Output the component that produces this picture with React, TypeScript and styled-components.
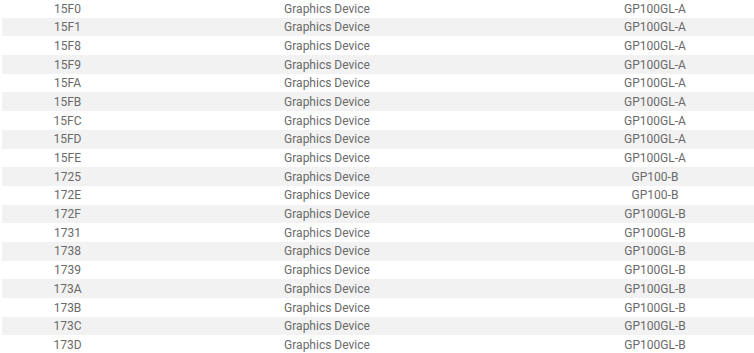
import styled, { createGlobalStyle } from "styled-components";

const GlobalStyle = createGlobalStyle`
  html, body {
    margin: 0;
    padding: 0;
    background: #fff;
    overflow: hidden;
  }
`;

const rowHeight = 18.7;

const Table = styled.div`
  margin: -1px 0 0 2px;
  font-family: Roboto, "Liberation Sans", sans-serif;
  font-size: 12px;
  color: #6a6a6a;
`;

const Row = styled.div<{ $striped: boolean }>`
  display: grid;
  grid-template-columns: 128px 394px 262px;
  box-sizing: border-box;
  height: ${rowHeight}px;
  padding-top: 1.5px;
  line-height: ${rowHeight - 1.5}px;
  background: ${(props) => (props.$striped ? "#f2f2f2" : "#fff")};
`;

const Cell = styled.div<{ $shift?: number }>`
  text-align: center;
  white-space: nowrap;
  padding-left: ${(props) => props.$shift ?? 0}px;
`;

const rows: [string, string][] = [
  ["15F0", "GP100GL-A"],
  ["15F1", "GP100GL-A"],
  ["15F8", "GP100GL-A"],
  ["15F9", "GP100GL-A"],
  ["15FA", "GP100GL-A"],
  ["15FB", "GP100GL-A"],
  ["15FC", "GP100GL-A"],
  ["15FD", "GP100GL-A"],
  ["15FE", "GP100GL-A"],
  ["1725", "GP100-B"],
  ["172E", "GP100-B"],
  ["172F", "GP100GL-B"],
  ["1731", "GP100GL-B"],
  ["1738", "GP100GL-B"],
  ["1739", "GP100GL-B"],
  ["173A", "GP100GL-B"],
  ["173B", "GP100GL-B"],
  ["173C", "GP100GL-B"],
  ["173D", "GP100GL-B"],
];

export default function App() {
  return (
    <>
      <GlobalStyle />
      <Table>
        {rows.map(([id, chip], i) => (
          <Row key={id} $striped={i % 2 === 1}>
            <Cell $shift={3}>{id}</Cell>
            <Cell>Graphics Device</Cell>
            <Cell>{chip}</Cell>
          </Row>
        ))}
      </Table>
    </>
  );
}
